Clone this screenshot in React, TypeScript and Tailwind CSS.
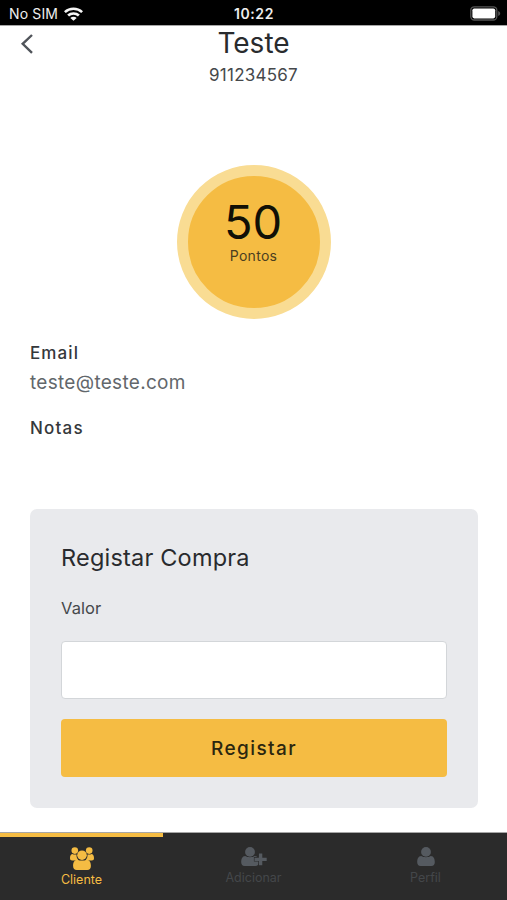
import React from 'react';

interface Tab {
  label: string;
  icon: React.ReactNode;
  active?: boolean;
  className: string;
}

function WifiIcon() {
  return (
    <svg width="19" height="14" viewBox="0 0 18 14" preserveAspectRatio="none" fill="none" stroke="#f5f5f5" strokeWidth="2.5">
      <path d="M.8 5.100a11.600 11.600 0 0 1 16.400 0" />
      <path d="M3.900 8.500a7.200 7.200 0 0 1 10.200 0" />
      <path d="M9 13.800 6 10.900a4.200 4.200 0 0 1 6 0z" fill="#f5f5f5" stroke="none" />
    </svg>
  );
}

function BatteryIcon() {
  return (
    <svg width="31" height="15" viewBox="0 0 31 15">
      <rect x="0.8" y="0.8" width="26" height="13.2" rx="3.5" fill="none" stroke="#555" strokeWidth="1.3" />
      <rect x="2.400" y="2.400" width="22.800" height="10" rx="1.800" fill="#fff" />
      <path d="M28.2 5v5c1.2-.4 2-1.300 2-2.500s-.8-2.100-2-2.500z" fill="#555" />
    </svg>
  );
}

function ClientsIcon() {
  return (
    <svg width="24" height="24" viewBox="0 0 24 24" fill="currentColor">
      <circle cx="4.800" cy="3.600" r="3.300" />
      <circle cx="19.200" cy="3.600" r="3.300" />
      <path d="M2.300 6.900c1.300.7 2.700.8 4.200.5-.2 2.100.5 3.900 1.700 5.200-.5.200-.8.500-1.100.9H2.200C.8 13.500 0 12.700 0 11.300c0-2.100.6-4.200 2.300-4.400z" />
      <path d="M21.700 6.900c-1.300.7-2.700.8-4.200.5.200 2.100-.5 3.900-1.700 5.200.5.200.8.500 1.100.9h4.900c1.400 0 2.200-.8 2.200-2.200 0-2.100-.6-4.200-2.300-4.400z" />
      <circle cx="12" cy="8.200" r="4.800" />
      <path d="M7.400 12.700c1.300.6 2.900.9 4.600.9s3.300-.3 4.600-.9c3 .2 4.300 2.700 4.300 6.200 0 2.600-1.400 4.100-3.600 4.100H6.700c-2.200 0-3.600-1.500-3.600-4.100 0-3.500 1.300-6 4.300-6.200z" />
    </svg>
  );
}

function PersonPath() {
  return (
    <>
      <circle cx="9" cy="4.900" r="4.900" />
      <path d="M4.200 9c1.300.8 3 1.200 4.800 1.200s3.500-.4 4.800-1.200c3 .2 4 2.900 4 6.300 0 2.400-1.300 3.700-3.300 3.700h-11C1.500 19 .2 17.700.2 15.300c0-3.400 1-6.100 4-6.300z" />
    </>
  );
}

function AddPersonIcon() {
  return (
    <svg width="26" height="19" viewBox="0 0 26 19" fill="currentColor">
      <PersonPath />
      <path
        d="M17.900 6.500h3.400v4.200h4.400v3.300h-4.400v4.200h-3.400V14h-4.400v-3.300h4.400z"
        stroke="#2b2b2b"
        strokeWidth="1.200"
        paintOrder="stroke"
      />
    </svg>
  );
}

function PersonIcon() {
  return (
    <svg width="18" height="19" viewBox="0 0 18 19" fill="currentColor">
      <PersonPath />
    </svg>
  );
}

const tabs: Tab[] = [
  { label: 'Cliente', icon: <ClientsIcon />, active: true, className: 'w-[163px] text-[#f5bc43]' },
  { label: 'Adicionar', icon: <AddPersonIcon />, className: 'w-[181px] text-[#555a60]' },
  { label: 'Perfil', icon: <PersonIcon />, className: 'w-[163px] text-[#555a60]' },
];

function StatusBar() {
  return (
    <div className="flex h-[26px] items-center justify-between border-b border-[#a6a6a6] bg-black pr-[6px] pl-[9px] text-[14px] text-[#eee]">
      <div className="flex w-[130px] items-center gap-[6px] pt-[2px]">
        <span className="leading-[18px] tracking-[0.15px]">No SIM</span>
        <WifiIcon />
      </div>
      <span className="pt-[2px] pr-[2px] font-semibold tracking-[0.6px]">10:22</span>
      <div className="flex w-[130px] justify-end pt-px">
        <BatteryIcon />
      </div>
    </div>
  );
}

function Header() {
  return (
    <header className="grid h-[62px] grid-cols-[60px_1fr_60px]">
      <button aria-label="Voltar" className="flex items-start pt-[7px] pl-[20px]">
        <svg width="14" height="22" viewBox="0 0 14 22" fill="none" stroke="#50545a" strokeWidth="2.400">
          <path d="M12 2 2.700 10.800 12 19.800" />
        </svg>
      </button>
      <div className="text-center">
        <h1 className="text-[28px] leading-[34px] text-[#292b2e]">Teste</h1>
        <p className="mt-[4px] text-[17px] leading-[22px] tracking-[0.25px] text-[#45484b]">911234567</p>
      </div>
    </header>
  );
}

function Points({ value }: { value: number }) {
  return (
    <div className="mx-auto mt-[76.5px] flex h-[154px] w-[154px] flex-col items-center rounded-full border-[11.5px] border-[#f9dc93] bg-[#f5bc43]">
      <span className="mt-[17px] pr-px text-[47px] leading-[58px] text-[#111006]">{value}</span>
      <span className="-mt-[4px] text-[14px] leading-[17px] tracking-[0.3px] text-[#4b3e20]">Pontos</span>
    </div>
  );
}

export default function App() {
  return (
    <div className="flex h-[900px] w-[507px] flex-col overflow-hidden bg-white font-['Inter',sans-serif]">
      <StatusBar />
      <Header />
      <main className="flex-1">
        <Points value={50} />

        <section className="mt-[23.5px] px-[30px]">
          <h2 className="text-[17px] leading-[22px] font-medium tracking-[1.100px] text-[#35383b]">Email</h2>
          <p className="mt-[6px] text-[19px] leading-[26px] tracking-[0.3px] text-[#62676b]">teste@teste.com</p>
          <h2 className="mt-[21px] text-[17px] leading-[22px] font-medium tracking-[1.200px] text-[#35383b]">Notas</h2>
        </section>

        <section className="mr-[29px] ml-[30px] mt-[70px] h-[299px] rounded-[7px] bg-[#e9eaed] px-[31px] pt-[32px]">
          <h2 className="text-[23.500px] leading-[34px] tracking-[0.2px] text-[#292b2e]">Registar Compra</h2>
          <label htmlFor="valor" className="mt-[22px] block text-[16.500px] leading-[22px] tracking-[0.1px] text-[#45484b]">
            Valor
          </label>
          <input
            id="valor"
            type="text"
            className="mt-[22px] block h-[58px] w-full rounded-[4px] border border-[#d3d6d9] bg-white px-3"
          />
          <button className="mt-[20px] block h-[58px] w-full rounded-[4px] bg-[#f5bc43] pt-[3px] text-[19px] font-medium tracking-[1.400px] text-[#2c260f]">
            Registar
          </button>
        </section>
      </main>

      <nav className="flex h-[68px] border-t border-[#a6a6a6] bg-[#2b2b2b]">
        {tabs.map((tab) => (
          <div
            key={tab.label}
            className={`flex flex-col items-center border-t-4 ${tab.active ? 'border-[#f5bc43]' : 'border-transparent'} ${tab.className}`}
          >
            <div className="mt-[10px] flex h-[24px] items-start">{tab.icon}</div>
            <span className={`text-[12.500px] leading-[18px] ${tab.active ? '' : '-mt-[2px] text-[#44474a]'}`}>{tab.label}</span>
          </div>
        ))}
      </nav>
    </div>
  );
}
